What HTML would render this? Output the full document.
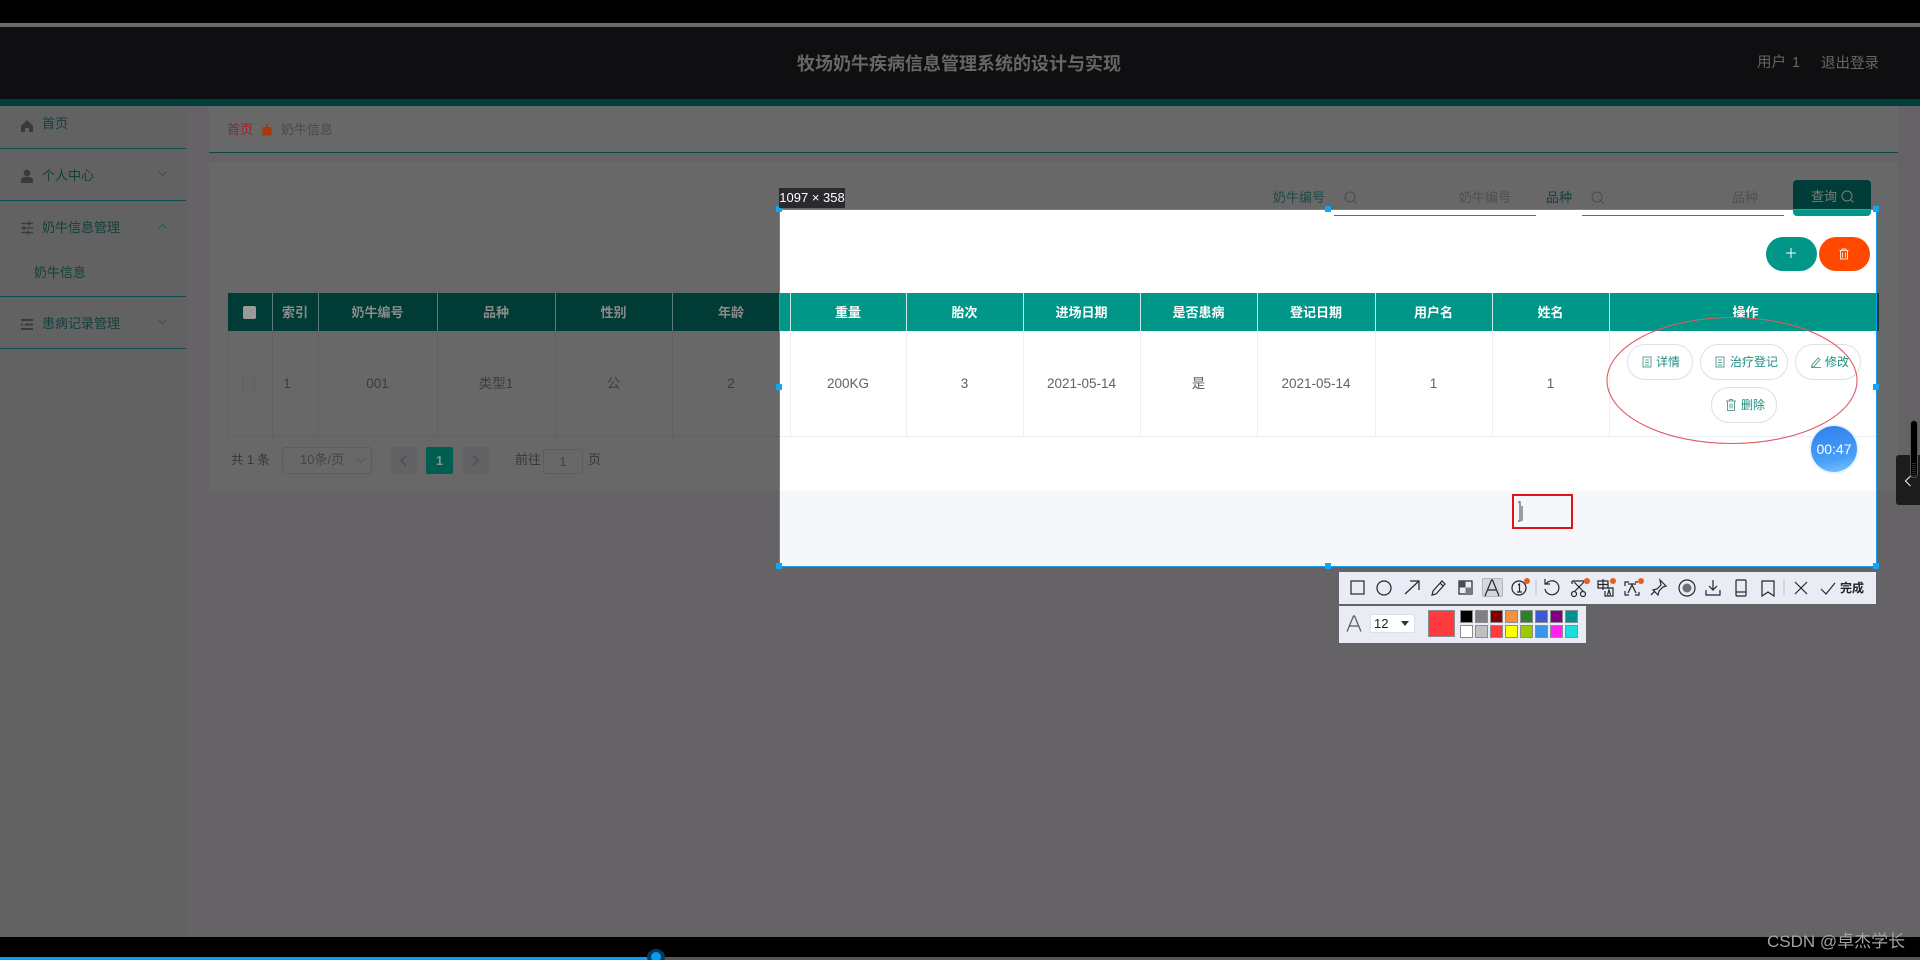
<!DOCTYPE html>
<html lang="zh"><head><meta charset="utf-8"><title>奶牛信息</title>
<style>
html,body{margin:0;padding:0;width:1920px;height:960px;overflow:hidden;background:#656365}
body{position:relative;font-family:"Liberation Sans","Noto Sans CJK SC",sans-serif}
div,span.a,svg.a{position:absolute}
.t{white-space:nowrap;height:20px;line-height:20px}
.c{text-align:center}
.l{background:#0c4f4a;height:1px;left:0;width:186px}
.s{color:#123f3b;font-size:13px}
.th{top:303px;color:#8b8b8b;font-size:13px;font-weight:bold;text-align:center}
.td{top:374px;color:#3d3c40;font-size:13.5px;text-align:center}
.bh{top:303px;color:#fff;font-size:13px;font-weight:bold;text-align:center}
.bd{top:374px;color:#606266;font-size:13.5px;text-align:center}
.v1{width:1px;top:293px;height:38px;background:#5a7d79}
.v2{width:1px;top:331px;height:105px;background:#5f5f67}
.v3{width:1px;top:293px;height:38px;background:#cdeae6}
.v4{width:1px;top:331px;height:105px;background:#ebeef5}
.op{height:34px;border:1px solid #dcdfe6;border-radius:18px;background:#fff;color:#1d8d83;font-size:12px;line-height:34px;text-align:center;white-space:nowrap;box-sizing:content-box}
.h{width:6px;height:6px;background:#12a4f5}
.ic{fill:none;stroke:#26262a;stroke-width:1.2}
.dot{width:6px;height:6px;border-radius:50%;background:#e8601c;top:578px}
.sw{width:11px;height:11px;border:1px solid #8d8d90}
</style></head><body>
<!-- top -->
<div style="left:0;top:0;width:1920px;height:23px;background:#000"></div>
<div style="left:0;top:23px;width:1920px;height:4px;background:#6d6b6c"></div>
<div style="left:0;top:27px;width:1920px;height:72px;background:#0f0e11"></div>
<div style="left:0;top:99px;width:1920px;height:7px;background:#003f39"></div>
<div class="t" style="left:797px;top:54px;font-size:18px;font-weight:bold;color:#676767;line-height:20px">牧场奶牛疾病信息管理系统的设计与实现</div>
<div class="t" style="left:1757px;top:53px;font-size:14.5px;color:#666;word-spacing:2px">用户 1</div>
<div class="t" style="left:1821px;top:54px;font-size:14.5px;color:#666">退出登录</div>

<!-- sidebar -->
<div style="left:0;top:106px;width:186px;height:831px;background:#626262"></div>
<div class="l" style="top:148px"></div><div class="l" style="top:200px"></div><div class="l" style="top:296px"></div><div class="l" style="top:348px"></div>
<svg class="a" style="left:20px;top:119px" width="14" height="14" viewBox="0 0 14 14"><path d="M7 1L1 7v6h4V9h4v4h4V7z" fill="#3a3a3d"/></svg>
<div class="t s" style="left:42px;top:114px">首页</div>
<svg class="a" style="left:20px;top:169px" width="14" height="14" viewBox="0 0 14 14"><circle cx="7" cy="4" r="3.400" fill="#3a3a3d"/><path d="M1 14v-3c0-2 2-3 6-3s6 1 6 3v3z" fill="#3a3a3d"/></svg>
<div class="t s" style="left:42px;top:166px">个人中心</div>
<svg class="a" style="left:158px;top:171px" width="9" height="6" viewBox="0 0 9 6"><path d="M.5.5l4 4 4-4" fill="none" stroke="#2b5a56"/></svg>
<svg class="a" style="left:20px;top:221px" width="14" height="14" viewBox="0 0 14 14"><path d="M1 2.500h12M1 7h12M1 11.500h12" stroke="#3a3a3d" stroke-width="1.200"/><path d="M9 .5v4M4 5v4M8 9.500v4" stroke="#3a3a3d" stroke-width="1.600"/></svg>
<div class="t s" style="left:42px;top:218px">奶牛信息管理</div>
<svg class="a" style="left:158px;top:223px" width="9" height="6" viewBox="0 0 9 6"><path d="M.5 5.500l4-4 4 4" fill="none" stroke="#2b5a56"/></svg>
<div class="t s" style="left:34px;top:263px">奶牛信息</div>
<svg class="a" style="left:20px;top:318px" width="14" height="13" viewBox="0 0 14 13"><path d="M1 2h12M5 6.500h8M1 11h12" stroke="#3a3a3d" stroke-width="2"/><path d="M1 6.500h2" stroke="#3a3a3d" stroke-width="2"/></svg>
<div class="t s" style="left:42px;top:314px">患病记录管理</div>
<svg class="a" style="left:158px;top:319px" width="9" height="6" viewBox="0 0 9 6"><path d="M.5.5l4 4 4-4" fill="none" stroke="#2b5a56"/></svg>

<!-- breadcrumb -->
<div style="left:209px;top:106px;width:1689px;height:46px;background:#686868"></div>
<div style="left:209px;top:152px;width:1689px;height:1px;background:#0d4a47"></div>
<div class="t" style="left:227px;top:120px;font-size:13px;color:#93262c">首页</div>
<svg class="a" style="left:262px;top:124px" width="10" height="12" viewBox="0 0 10 12"><path d="M4 0h2v3h3.500v8.500H.5V3H4z" fill="#a33a0e"/></svg>
<div class="t" style="left:281px;top:120px;font-size:13px;color:#4a494f">奶牛信息</div>

<!-- panel -->
<div style="left:209px;top:162px;width:1689px;height:329px;background:#686868"></div>
<div class="t" style="left:1273px;top:188px;font-size:13px;color:#1c4a46">奶牛编号</div>
<svg class="a" style="left:1344px;top:191px" width="13" height="13" viewBox="0 0 13 13"><circle cx="6" cy="6" r="5" fill="none" stroke="#4c4c4e"/><path d="M9.500 9.500l3 3" stroke="#4c4c4e"/></svg>
<div class="t" style="left:1459px;top:188px;font-size:13px;color:#4f4e52">奶牛编号</div>
<div class="t" style="left:1546px;top:188px;font-size:13px;color:#14403c">品种</div>
<svg class="a" style="left:1591px;top:191px" width="13" height="13" viewBox="0 0 13 13"><circle cx="6" cy="6" r="5" fill="none" stroke="#4c4c4e"/><path d="M9.500 9.500l3 3" stroke="#4c4c4e"/></svg>
<div class="t" style="left:1732px;top:188px;font-size:13px;color:#4f4e52">品种</div>
<div style="left:1793px;top:180px;width:78px;height:36px;background:#003d38;border-radius:4px"></div>
<div class="t" style="left:1811px;top:187px;font-size:13px;color:#7d7d7d">查询</div>
<svg class="a" style="left:1841px;top:190px" width="13" height="13" viewBox="0 0 13 13"><circle cx="6" cy="6" r="5" fill="none" stroke="#7d7d7d"/><path d="M9.500 9.500l3 3" stroke="#7d7d7d"/></svg>

<!-- dim table -->
<div style="left:228px;top:293px;width:551px;height:38px;background:#003b36"></div>
<div style="left:228px;top:436px;width:551px;height:1px;background:#5f5f67"></div>
<div style="left:228px;top:331px;width:1px;height:105px;background:#5f5f67"></div>
<div class="v1" style="left:272px"></div><div class="v1" style="left:318px"></div><div class="v1" style="left:437px"></div><div class="v1" style="left:555px"></div><div class="v1" style="left:672px"></div>
<div class="v2" style="left:272px"></div><div class="v2" style="left:318px"></div><div class="v2" style="left:437px"></div><div class="v2" style="left:555px"></div><div class="v2" style="left:672px"></div>
<div style="left:243px;top:306px;width:13px;height:13px;background:#9a9a9a;border-radius:2px"></div>
<div class="t th" style="left:272px;width:46px">索引</div>
<div class="t th" style="left:318px;width:119px">奶牛编号</div>
<div class="t th" style="left:437px;width:118px">品种</div>
<div class="t th" style="left:555px;width:117px">性别</div>
<div class="t th" style="left:672px;width:118px">年龄</div>
<div style="left:242px;top:377px;width:11px;height:12px;border:1px solid #5f5f67;border-radius:2px"></div>
<div class="t td" style="left:282px;width:10px">1</div>
<div class="t td" style="left:318px;width:119px">001</div>
<div class="t td" style="left:437px;width:118px">类型1</div>
<div class="t td" style="left:555px;width:117px">公</div>
<div class="t td" style="left:672px;width:118px">2</div>

<!-- pagination -->
<div class="t" style="left:231px;top:450px;font-size:12.500px;color:#383739">共 1 条</div>
<div style="left:282px;top:447px;width:88px;height:25px;border:1px solid #5c5c62;border-radius:3px"></div>
<div class="t" style="left:300px;top:450px;font-size:13px;color:#454448">10条/页</div>
<svg class="a" style="left:356px;top:458px" width="9" height="6" viewBox="0 0 9 6"><path d="M.5.5l4 4 4-4" fill="none" stroke="#56565a"/></svg>
<div style="left:391px;top:447px;width:26px;height:27px;background:#626265;border-radius:2px"></div>
<svg class="a" style="left:400px;top:455px" width="7" height="11" viewBox="0 0 7 11"><path d="M6 .5l-5 5 5 5" fill="none" stroke="#4b4b4e" stroke-width="1.200"/></svg>
<div class="t c" style="left:426px;width:27px;height:27px;top:447px;line-height:27px;background:#005e50;color:#8f8f8f;font-size:13px;font-weight:bold;border-radius:2px">1</div>
<div style="left:463px;top:447px;width:26px;height:27px;background:#626265;border-radius:2px"></div>
<svg class="a" style="left:472px;top:455px" width="7" height="11" viewBox="0 0 7 11"><path d="M1 .5l5 5-5 5" fill="none" stroke="#4b4b4e" stroke-width="1.200"/></svg>
<div class="t" style="left:515px;top:450px;font-size:13px;color:#383739">前往</div>
<div class="t c" style="left:543px;top:449px;width:38px;height:23px;line-height:23px;border:1px solid #5c5c62;border-radius:3px;font-size:13px;color:#454448">1</div>
<div class="t" style="left:588px;top:450px;font-size:13px;color:#383739">页</div>

<!-- selection bright area -->
<div style="left:779px;top:209px;width:1097px;height:282px;background:#fff"></div>
<div style="left:779px;top:491px;width:1097px;height:75px;background:#f5f7fb"></div>
<div style="left:1334px;top:215px;width:202px;height:1px;background:#009688"></div>
<div style="left:1582px;top:215px;width:202px;height:1px;background:#009688"></div>
<div style="left:1793px;top:209px;width:78px;height:7px;background:#009688;border-radius:0 0 4px 4px"></div>
<div style="left:1766px;top:237px;width:51px;height:34px;border-radius:17px;background:#009688"></div>
<svg class="a" style="left:1784px;top:246px" width="14" height="14" viewBox="0 0 14 14"><path d="M7 2v10M2 7h10" stroke="#fff" stroke-width="1"/></svg>
<div style="left:1819px;top:237px;width:51px;height:34px;border-radius:17px;background:#ff4800"></div>
<svg class="a" style="left:1838px;top:248px" width="12" height="12" viewBox="0 0 12 12"><path d="M1.500 2.500h9M4 2.500V1h4v1.500M2.500 3v8h7V3M4.500 4.500v5M7.500 4.500v5" fill="none" stroke="#ffe0d0" stroke-width="1"/></svg>

<!-- bright table -->
<div style="left:779px;top:293px;width:1097px;height:38px;background:#009688"></div>
<div style="left:1877px;top:293px;width:2px;height:38px;background:#0a3f3c"></div>
<div style="left:779px;top:436px;width:1097px;height:1px;background:#ebeef5"></div>
<div class="v3" style="left:790px"></div><div class="v3" style="left:906px"></div><div class="v3" style="left:1023px"></div><div class="v3" style="left:1140px"></div><div class="v3" style="left:1257px"></div><div class="v3" style="left:1375px"></div><div class="v3" style="left:1492px"></div><div class="v3" style="left:1609px"></div>
<div class="v4" style="left:790px"></div><div class="v4" style="left:906px"></div><div class="v4" style="left:1023px"></div><div class="v4" style="left:1140px"></div><div class="v4" style="left:1257px"></div><div class="v4" style="left:1375px"></div><div class="v4" style="left:1492px"></div><div class="v4" style="left:1609px"></div>
<div class="t bh" style="left:790px;width:116px">重量</div>
<div class="t bh" style="left:906px;width:117px">胎次</div>
<div class="t bh" style="left:1023px;width:117px">进场日期</div>
<div class="t bh" style="left:1140px;width:117px">是否患病</div>
<div class="t bh" style="left:1257px;width:118px">登记日期</div>
<div class="t bh" style="left:1375px;width:117px">用户名</div>
<div class="t bh" style="left:1492px;width:117px">姓名</div>
<div class="t bh" style="left:1612px;width:267px">操作</div>
<div class="t bd" style="left:790px;width:116px">200KG</div>
<div class="t bd" style="left:906px;width:117px">3</div>
<div class="t bd" style="left:1023px;width:117px">2021-05-14</div>
<div class="t bd" style="left:1140px;width:117px">是</div>
<div class="t bd" style="left:1257px;width:118px">2021-05-14</div>
<div class="t bd" style="left:1375px;width:117px">1</div>
<div class="t bd" style="left:1492px;width:117px">1</div>

<div class="op" style="left:1627px;top:344px;width:64px"><span style="margin-left:16px">详情</span></div>
<div class="op" style="left:1700px;top:344px;width:86px"><span style="margin-left:20px">治疗登记</span></div>
<div class="op" style="left:1795px;top:344px;width:64px"><span style="margin-left:18px">修改</span></div>
<div class="op" style="left:1711px;top:387px;width:64px"><span style="margin-left:18px">删除</span></div>
<svg class="a" style="left:1642px;top:356px" width="10" height="12" viewBox="0 0 10 12"><path d="M1 1h8v10H1zM3 4h4M3 6.500h4M3 9h4" fill="none" stroke="#5d9f99"/></svg>
<svg class="a" style="left:1715px;top:356px" width="10" height="12" viewBox="0 0 10 12"><path d="M1 1h8v10H1zM3 4h4M3 6.500h4M3 9h4" fill="none" stroke="#5d9f99"/></svg>
<svg class="a" style="left:1810px;top:356px" width="12" height="12" viewBox="0 0 12 12"><path d="M2 9l6-7 2 1.500-6 7-2.500.5zM1 11.500h10" fill="none" stroke="#5d9f99"/></svg>
<svg class="a" style="left:1726px;top:399px" width="10" height="12" viewBox="0 0 10 12"><path d="M0 2h10M3.500 2V.5h3V2M1.500 2v9.500h7V2M4 4.500v5M6 4.500v5" fill="none" stroke="#5d9f99"/></svg>

<!-- annotation -->
<svg class="a" style="left:1600px;top:310px" width="270" height="145" viewBox="0 0 270 145"><ellipse cx="132" cy="70.500" rx="125" ry="63" fill="none" stroke="#de5a62" stroke-width="1.100"/></svg>
<div style="left:1809px;top:424px;width:50px;height:50px;border-radius:50%;background:#eaf3fd"></div>
<div style="left:1811px;top:426px;width:46px;height:46px;border-radius:50%;background:linear-gradient(170deg,#2f7fee 0%,#4a9ff7 70%,#7fc6ff 100%);overflow:hidden"></div>
<div class="t c" style="left:1811px;top:439px;width:46px;color:#fff;font-size:14px">00:47</div>
<div style="left:1512px;top:494px;width:57px;height:31px;border:2px solid #e0141a"></div>
<svg class="a" style="left:1516px;top:501px" width="9" height="22" viewBox="0 0 9 22"><path d="M2 1h2v19H2M6 5v15" stroke="#77777c" stroke-width="1.400" fill="none"/></svg>

<!-- selection frame -->
<div style="left:779px;top:209px;width:1096px;height:356px;border:1px solid #1b9ee8"></div>
<div class="h" style="left:776px;top:206px"></div><div class="h" style="left:1325px;top:206px"></div><div class="h" style="left:1873px;top:206px"></div>
<div class="h" style="left:776px;top:384px"></div><div class="h" style="left:1873px;top:384px"></div>
<div class="h" style="left:776px;top:563px"></div><div class="h" style="left:1325px;top:563px"></div><div class="h" style="left:1873px;top:563px"></div>
<div class="c" style="left:779px;top:188px;width:66px;height:20px;line-height:20px;background:#2a2a2e;color:#fff;font-size:13px;white-space:nowrap">1097 × 358</div>

<!-- toolbar 1 -->
<div style="left:1339px;top:572px;width:537px;height:32px;background:#e9ebf5"></div>
<div style="left:1482px;top:578px;width:21px;height:19px;background:#d5d6df;border:1px solid #b4b5bd;box-sizing:border-box;border-radius:2px"></div>
<svg class="a" style="left:1339px;top:572px" width="537" height="32" viewBox="1339 572 537 32">
<g class="ic">
<rect x="1351" y="581" width="13" height="13"/>
<circle cx="1384" cy="588" r="7"/>
<path d="M1405 594l14-13M1410 581h9v9"/>
<path d="M1432 595l1-4 9-10 3 3-9 10zM1440 583l3 3"/>
<rect x="1459" y="581" width="13" height="13"/>
<path d="M1485 596l6.500-16 1 0 6.500 16M1487.500 590h9"/>
<circle cx="1519" cy="588" r="7"/>
<path d="M1518 585l1.500-1v8M1517 592h5"/>
<path d="M1536 580v15" stroke="#c3c4cc"/>
<path d="M1546 584a7 7 0 1 1-1 5M1545 579v5h5"/>
<path d="M1572 581h14v3M1572 581v3M1574 582l9 9M1584 582l-9 9"/><circle cx="1574" cy="594" r="2.500"/><circle cx="1583" cy="594" r="2.500"/>
<path d="M1598 581h10v7h-10zM1603 579v11M1598 584.500h10M1607 588h6v8h-8v-5M1607.500 595l1.500-5 1.500 5"/>
<path d="M1625 586v-4h4M1625 591v4h4M1635 582h3M1635 595h4v-3M1628 584h8M1628 593l4-8 4 8"/>
<path d="M1660 580l6 6-3 1-4 4-1 4-5-5 4-1 4-4zM1655 591l-4 4"/>
<circle cx="1687" cy="588" r="8"/>
<path d="M1713 580v10M1709 586l4 4 4-4M1706 590v5h14v-5"/>
<rect x="1736" y="580" width="10" height="16" rx="1"/><path d="M1736 592h10"/>
<path d="M1762 581h12v15l-6-4-6 4z"/>
<path d="M1784 580v15" stroke="#c3c4cc"/>
<path d="M1795 582l12 12M1807 582l-12 12"/>
<path d="M1821 589l5 5 9-11"/>
</g>
<circle cx="1687" cy="588" r="4.500" fill="#6f6f78"/>
<rect x="1459" y="581" width="6.500" height="6.500" fill="#4a4a4f"/><rect x="1465.500" y="587.500" width="6.500" height="6.500" fill="#7a7a80"/>
</svg>
<div class="dot" style="left:1524px"></div><div class="dot" style="left:1584px"></div><div class="dot" style="left:1610px"></div><div class="dot" style="left:1638px"></div>
<div class="t" style="left:1840px;top:578px;font-size:12px;font-weight:bold;color:#222">完成</div>

<!-- toolbar 2 -->
<div style="left:1339px;top:606px;width:247px;height:37px;background:#e9ebf5"></div>
<svg class="a" style="left:1346px;top:615px" width="16" height="17" viewBox="0 0 16 17"><path d="M1 16.500L7.500 1h1L15 16.500M3.500 11h9" fill="none" stroke="#55555c" stroke-width="1.200"/></svg>
<div style="left:1370px;top:614px;width:45px;height:19px;background:#fff;border:1px solid #dddfe8;box-sizing:border-box"></div>
<div class="t" style="left:1374px;top:614px;font-size:13px;color:#222">12</div>
<div style="left:1401px;top:621px;width:0;height:0;border-left:4px solid transparent;border-right:4px solid transparent;border-top:5px solid #333"></div>
<div style="left:1428px;top:610px;width:25px;height:25px;background:#ff3a3f;border:1px solid #8d8d90"></div>
<div class="sw" style="left:1460px;top:610px;background:#000"></div>
<div class="sw" style="left:1475px;top:610px;background:#808080"></div>
<div class="sw" style="left:1490px;top:610px;background:#800000"></div>
<div class="sw" style="left:1505px;top:610px;background:#f78f3c"></div>
<div class="sw" style="left:1520px;top:610px;background:#2f7f2f"></div>
<div class="sw" style="left:1535px;top:610px;background:#3b5bd0"></div>
<div class="sw" style="left:1550px;top:610px;background:#800080"></div>
<div class="sw" style="left:1565px;top:610px;background:#009090"></div>
<div class="sw" style="left:1460px;top:625px;background:#fff"></div>
<div class="sw" style="left:1475px;top:625px;background:#c0c0c0"></div>
<div class="sw" style="left:1490px;top:625px;background:#ff3a3f"></div>
<div class="sw" style="left:1505px;top:625px;background:#ffff00"></div>
<div class="sw" style="left:1520px;top:625px;background:#99cc00"></div>
<div class="sw" style="left:1535px;top:625px;background:#3a95e8"></div>
<div class="sw" style="left:1550px;top:625px;background:#ff22ee"></div>
<div class="sw" style="left:1565px;top:625px;background:#1adddd"></div>

<!-- right handles -->
<div style="left:1896px;top:455px;width:24px;height:50px;background:#1c1c1c;border-radius:3px 0 0 3px"></div>
<svg class="a" style="left:1904px;top:475px" width="8" height="12" viewBox="0 0 8 12"><path d="M6.500 1L1.500 6l5 5" fill="none" stroke="#ddd" stroke-width="1.200"/></svg>
<div style="left:1910px;top:420px;width:8px;height:58px;background:#000;border:1px solid #555;box-sizing:border-box;border-radius:4px"></div>
<div style="left:1912px;top:463px;width:4px;height:13px;background:repeating-linear-gradient(#1d3a1d 0 1px,#000 1px 2px)"></div>

<!-- bottom -->
<div style="left:0;top:937px;width:1920px;height:20px;background:#000"></div>
<div style="left:0;top:957px;width:1920px;height:3px;background:#555"></div>
<div style="left:0;top:957px;width:656px;height:3px;background:#0a9bf7"></div>
<div style="left:647px;top:949px;width:18px;height:16px;border-radius:50%;background:#063a5e"></div>
<div style="left:651px;top:952px;width:10px;height:10px;border-radius:50%;background:#0a9bf7"></div>
<div class="t" style="left:1767px;top:932px;font-size:17px;color:#a3a3a3">CSDN @卓杰学长</div>
</body></html>
